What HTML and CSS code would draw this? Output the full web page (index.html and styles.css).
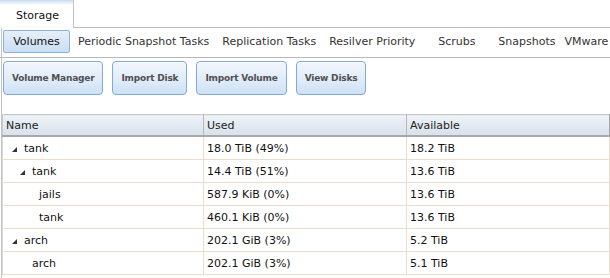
FILE: index.html
```html
<!DOCTYPE html>
<html>
<head>
<meta charset="utf-8">
<link rel="stylesheet" href="styles.css">
</head>
<body>
<div class="page">
  <div class="tabbar">
    <div class="maintab">Storage</div>
    <div class="tabfill"></div>
  </div>
  <div class="subtabs">
    <div class="subtab active">Volumes</div>
    <div class="subtab">Periodic Snapshot Tasks</div>
    <div class="subtab">Replication Tasks</div>
    <div class="subtab">Resilver Priority</div>
    <div class="subtab">Scrubs</div>
    <div class="subtab">Snapshots</div>
    <div class="subtab last">VMware</div>
  </div>
  <div class="actions">
    <div class="btn">Volume Manager</div>
    <div class="btn">Import Disk</div>
    <div class="btn">Import Volume</div>
    <div class="btn">View Disks</div>
  </div>
  <table class="grid">
    <colgroup><col class="c1"><col class="c2"><col class="c3"></colgroup>
    <thead>
      <tr><th>Name</th><th>Used</th><th>Available</th></tr>
    </thead>
    <tbody>
      <tr><td><span class="name l0"><i class="arrow"></i>tank</span></td><td>18.0 TiB (49%)</td><td>18.2 TiB</td></tr>
      <tr><td><span class="name l1"><i class="arrow"></i>tank</span></td><td>14.4 TiB (51%)</td><td>13.6 TiB</td></tr>
      <tr><td><span class="name l2">jails</span></td><td>587.9 KiB (0%)</td><td>13.6 TiB</td></tr>
      <tr><td><span class="name l2">tank</span></td><td>460.1 KiB (0%)</td><td>13.6 TiB</td></tr>
      <tr><td><span class="name l0"><i class="arrow"></i>arch</span></td><td>202.1 GiB (3%)</td><td>5.2 TiB</td></tr>
      <tr><td><span class="name l1leaf">arch</span></td><td>202.1 GiB (3%)</td><td>5.1 TiB</td></tr>
    </tbody>
  </table>
</div>
</body>
</html>
```

FILE: styles.css
```css
html, body {
  margin: 0;
  padding: 0;
  background: #fff;
}
body {
  font-family: "DejaVu Sans", Verdana, sans-serif;
  font-size: 11px;
  color: #222;
  width: 610px;
  height: 278px;
  overflow: hidden;
}
.page {
  margin-left: 1px;
  border-left: 1px solid #c4c4c4;
  min-height: 278px;
}
.tabbar {
  display: flex;
  height: 28px;
}
.maintab {
  width: 74px;
  height: 28px;
  box-sizing: border-box;
  margin-left: -2px;
  border-right: 1px solid #c4c4c4;
  background: linear-gradient(#c9dbef 0, #e9f1fa 3px, #fff 5px);
  color: #111;
  padding: 9px 0 0 16px;
}
.tabfill {
  flex: 1;
  border-bottom: 1px solid #bcbcbc;
}
.subtabs {
  display: flex;
  gap: 3px;
  height: 30px;
  box-sizing: border-box;
  padding: 2px 0 0 3px;
  margin-left: -2px;
  border-bottom: 1px solid #b8b8b8;
  white-space: nowrap;
  overflow: hidden;
}
.subtab {
  flex: none;
  min-width: 67px;
  box-sizing: border-box;
  height: 23px;
  line-height: 21px;
  padding: 0 4px;
  text-align: center;
  border: 1px solid transparent;
  color: #333;
}
.subtab.last {
  min-width: 0;
  padding-left: 0;
}
.subtab.active {
  border-color: #8fb2d9;
  border-radius: 2px;
  background: linear-gradient(#e6effa, #cadef4);
  color: #111;
}
.actions {
  display: flex;
  gap: 9px;
  padding: 3px 0 0 1px;
  height: 56px;
  box-sizing: border-box;
}
.btn {
  height: 34px;
  box-sizing: border-box;
  padding: 0 8px;
  line-height: 32px;
  border: 1px solid #83a9d3;
  border-radius: 4px;
  background: linear-gradient(#f1f6fc 0, #e3eefa 45%, #cfe1f5 100%);
  box-shadow: inset 0 1px 0 #fff;
  font-weight: bold;
  font-size: 9px;
  letter-spacing: -0.2px;
  color: #505050;
}
.grid {
  border-collapse: collapse;
  table-layout: fixed;
  width: 607px;
}
.c1 { width: 201px; }
.c2 { width: 203px; }
.c3 { width: 203px; }
.grid th {
  height: 20px;
  padding: 0 3px;
  text-align: left;
  font-weight: normal;
  color: #222;
  background: linear-gradient(#edf2f7, #d8e2ec);
  border-top: 1px solid #c8c8c8;
  border-bottom: 2px solid #a8a8a8;
  border-right: 1px solid #b8b8b8;
  border-left: 1px solid #c8c8c8;
}
.grid th:last-child {
  border-right: 2px solid #a8a8a8;
}
.grid td {
  height: 22px;
  padding: 0 3px;
  color: #111;
  border-bottom: 1px solid #eddccb;
  border-right: 1px solid #eddccb;
  white-space: nowrap;
}
.grid td:first-child {
  border-left: 1px solid #d8d8d8;
}
.name {
  display: inline-flex;
  align-items: center;
}
.l0 { padding-left: 6px; }
.l1 { padding-left: 14px; }
.l1leaf { padding-left: 26px; }
.l2 { padding-left: 33px; }
.arrow {
  display: inline-block;
  width: 0;
  height: 0;
  border-left: 5px solid transparent;
  border-bottom: 5px solid #333;
  margin-right: 7px;
  margin-top: 2px;
}
```
